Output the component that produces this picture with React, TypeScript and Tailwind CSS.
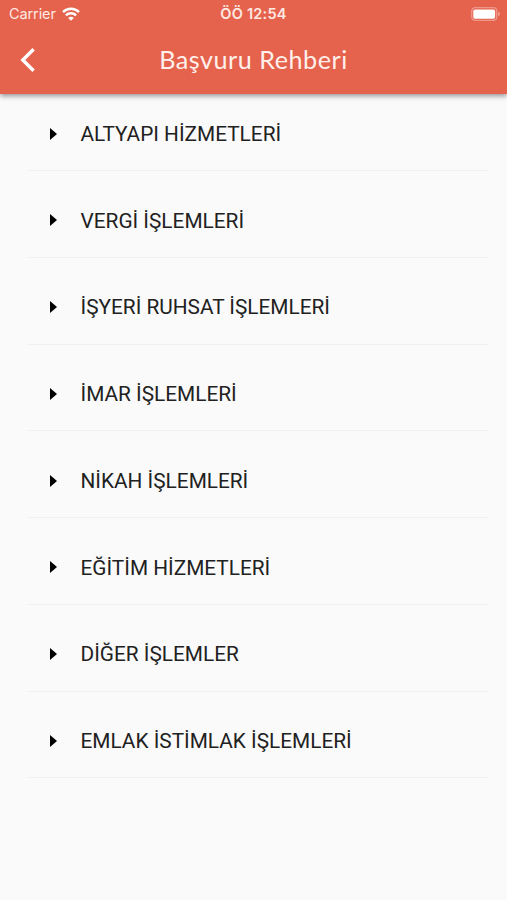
const services = [
    'ALTYAPI HİZMETLERİ',
    'VERGİ İŞLEMLERİ',
    'İŞYERİ RUHSAT İŞLEMLERİ',
    'İMAR İŞLEMLERİ',
    'NİKAH İŞLEMLERİ',
    'EĞİTİM HİZMETLERİ',
    'DİĞER İŞLEMLER',
    'EMLAK İSTİMLAK İŞLEMLERİ',
]

function WifiIcon() {
    return (
        <svg width="18" height="14" viewBox="0 0 18 14" fill="none" stroke="white" strokeWidth="2.5">
            <path d="M1 5.1a11.4 11.4 0 0 1 16 0" />
            <path d="M3.9 8.4a7.3 7.3 0 0 1 10.2 0" />
            <path d="M9 13.8 6.2 11a3.9 3.9 0 0 1 5.6 0z" fill="white" stroke="none" />
        </svg>
    )
}

function BatteryIcon() {
    return (
        <svg width="30" height="14" viewBox="0 0 30 14" fill="none">
            <rect x="0.7" y="0.7" width="25" height="12.6" rx="3.4" stroke="white" strokeOpacity="0.35" strokeWidth="1.3" />
            <rect x="2.3" y="2.5" width="21.8" height="9.2" rx="1.8" fill="white" />
            <path d="M27.2 4.8v4.4c1-.4 1.6-1.2 1.6-2.2s-.6-1.8-1.6-2.2z" fill="white" fillOpacity="0.45" />
        </svg>
    )
}

function StatusBar() {
    return (
        <div className="grid grid-cols-[1fr_auto_1fr] items-center h-[27px] pl-[9px] pr-[9px] font-['Inter',sans-serif] text-[14.5px] text-[#ffe9e3]">
            <div className="flex items-center gap-[6px]">
                <span className="tracking-[-0.1px]">Carrier</span>
                <WifiIcon />
            </div>
            <span className="text-center font-semibold tracking-[0.25px] whitespace-nowrap">ÖÖ 12:54</span>
            <div className="flex justify-end -mr-[3px]">
                <BatteryIcon />
            </div>
        </div>
    )
}

function Header() {
    return (
        <header className="relative h-[94px] bg-[#e5624d] shadow-[0_2px_5px_rgba(0,0,0,0.42)]">
            <StatusBar />
            <div className="grid grid-cols-[60px_1fr_60px] items-center h-[67px]">
                <button className="pl-[19px] pb-[2px]" aria-label="Geri">
                    <svg width="17" height="24" viewBox="0 0 17 24" fill="none" stroke="white" strokeWidth="3.4">
                        <path d="M14.6 1.2 3.8 12l10.8 10.8" />
                    </svg>
                </button>
                <h1 className="pb-[2px] text-center font-['Lato',sans-serif] text-[25.2px] tracking-[0.5px] text-[#fff0eb]">Başvuru Rehberi</h1>
            </div>
        </header>
    )
}

export default function App() {
    return (
        <div className="w-full h-screen overflow-hidden bg-[#fafafa]">
            <Header />
            <ul className="flex flex-col gap-[12.75px] pt-[3px] pl-[27px] pr-[19px]">
                {services.map((name) => (
                    <li key={name} className="flex items-center h-[74px] pl-[23px] border-b border-[#f0f0f0]">
                        <svg width="7" height="12" viewBox="0 0 7 12" className="shrink-0">
                            <path d="M0 0v12l7-6z" fill="black" />
                        </svg>
                        <span className="pl-[23.5px] pt-[2px] font-['Roboto',sans-serif] text-[20.8px] text-[#212121] whitespace-nowrap">{name}</span>
                    </li>
                ))}
            </ul>
        </div>
    )
}
